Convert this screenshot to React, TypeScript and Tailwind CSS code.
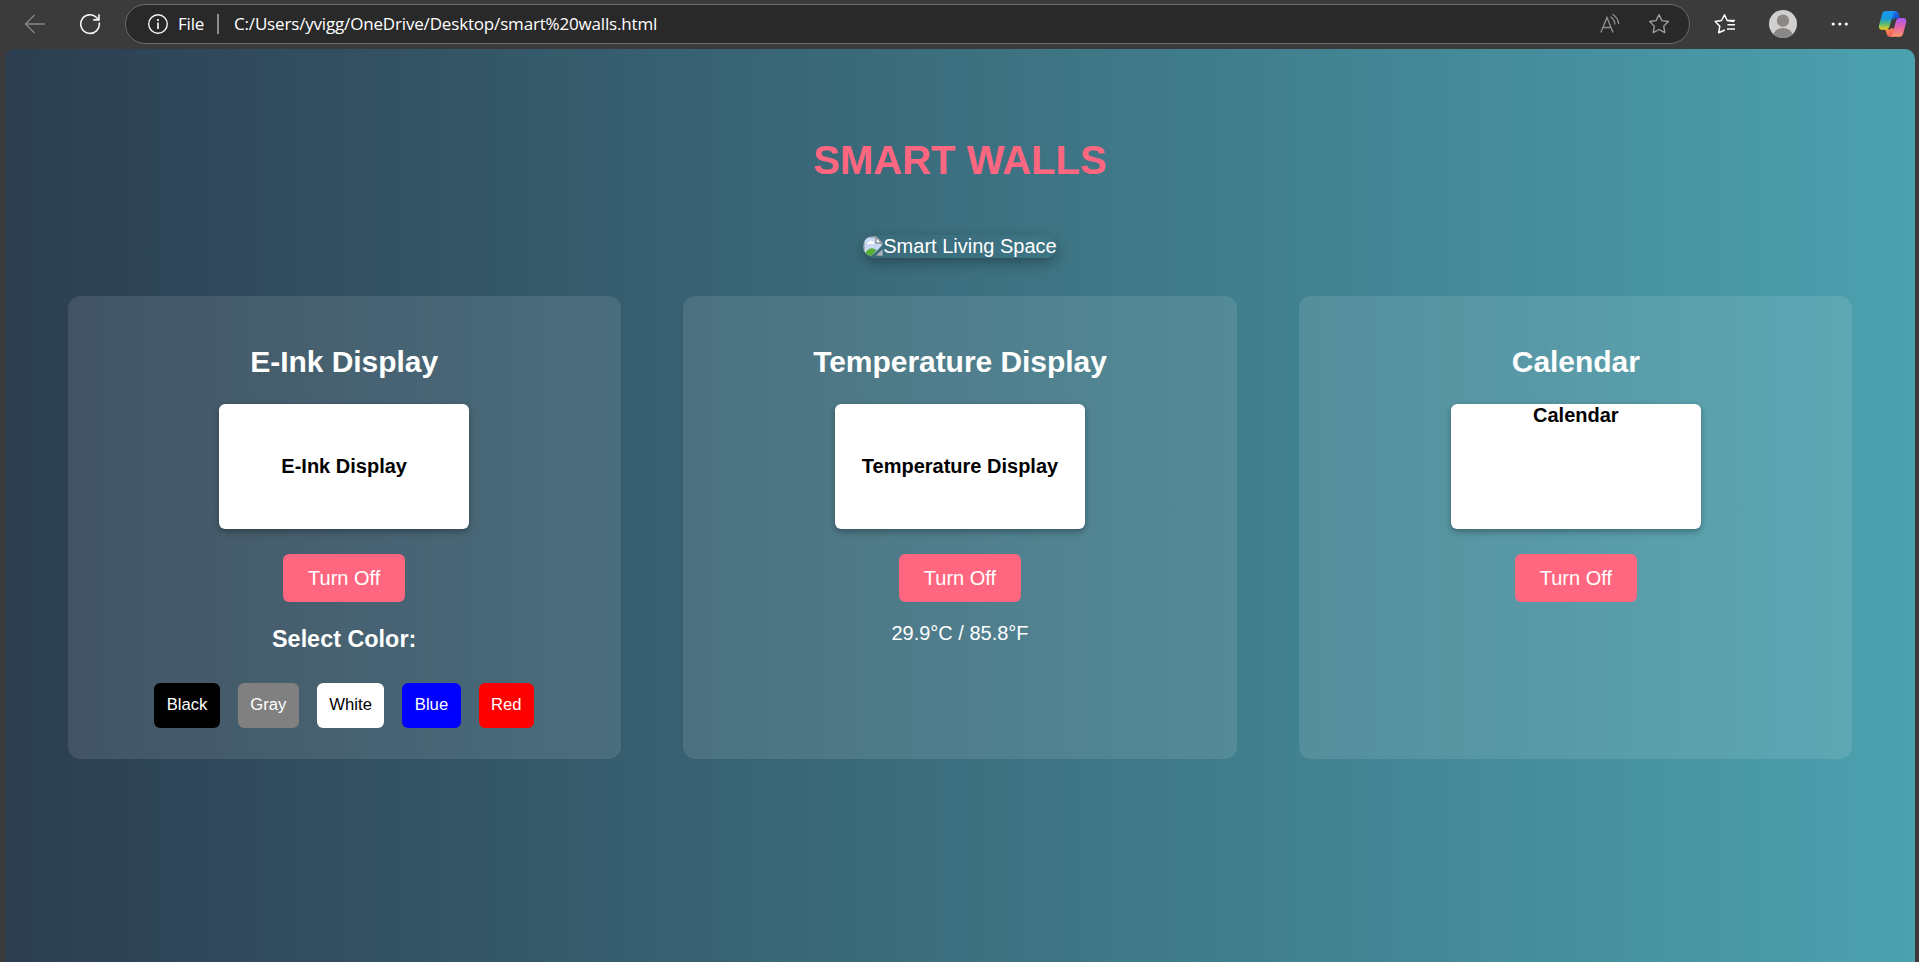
import type { ReactNode } from "react";

function Icon({ size = 24, className = "", children }: { size?: number; className?: string; children: ReactNode }) {
  return (
    <svg width={size} height={size} viewBox="0 0 24 24" fill="none" stroke="currentColor" strokeWidth="1.3" className={`shrink-0 ${className}`}>
      {children}
    </svg>
  );
}

function CopilotLogo() {
  return (
    <svg width="30" height="28" viewBox="0 0 30 28" className="shrink-0">
      <defs>
        <linearGradient id="cpBlue" x1="0" y1="0" x2="0" y2="1">
          <stop offset="0" stopColor="#1b96f2" />
          <stop offset=".4" stopColor="#1799dc" />
          <stop offset=".7" stopColor="#5dbb70" />
          <stop offset="1" stopColor="#f4cf1a" />
        </linearGradient>
        <linearGradient id="cpPink" x1="0" y1="0" x2="0" y2="1">
          <stop offset="0" stopColor="#a557f5" />
          <stop offset=".5" stopColor="#e864a8" />
          <stop offset="1" stopColor="#ff9a60" />
        </linearGradient>
        <linearGradient id="cpTop" x1="0" y1="0" x2="1" y2="1">
          <stop offset="0" stopColor="#1c7df0" />
          <stop offset="1" stopColor="#1747c9" />
        </linearGradient>
        <linearGradient id="cpBottom" x1="0" y1="0" x2="1" y2="1">
          <stop offset="0" stopColor="#ffa03c" />
          <stop offset="1" stopColor="#f0446c" />
        </linearGradient>
      </defs>
      <path d="M13 1H17C19.200 1 20 1.900 20.600 3.800L21.900 8.300H18.500C16.700 8.300 16 8.700 15.500 10L13 8Z" fill="url(#cpTop)" />
      <path d="M16 26.800H12.300C10.200 26.800 9.300 25.900 8.700 24L7.300 19.600H10.500C12.300 19.600 13 19 13.500 17.500L17 20Z" fill="url(#cpBottom)" />
      <path d="M8 1H18.500C16.600 1 15.900 2.200 15.300 4L11.500 16.500C10.700 19 9.800 19.800 7.600 19.800H4.600C1.200 19.800.3 17.700 1.200 14.500L4 4.500C4.700 2.100 5.700 1 8 1Z" fill="url(#cpBlue)" />
      <path d="M21.300 26.800H11.800C13.300 26.800 14 25.700 14.500 24L17.900 11.300C18.600 8.900 19.500 8.100 21.700 8.100H24.800C28 8.100 28.900 10.100 28 13.300L25.200 23.400C24.500 25.800 23.500 26.800 21.300 26.800Z" fill="url(#cpPink)" />
    </svg>
  );
}

const starPath = "M12 2.600l2.900 6 6.500.9-4.700 4.600 1.100 6.500-5.800-3.100-5.800 3.100 1.100-6.500-4.700-4.600 6.500-.9Z";

function BrowserBar() {
  return (
    <header className="flex h-[49px] shrink-0 items-center pb-px text-white">
      <Icon className="ml-[23px] text-[#858585]">
        <path d="M22 12H2.500M11.500 3l-9 9 9 9" />
      </Icon>
      <svg width="22" height="22" viewBox="0 0 22 22" fill="none" stroke="#f4f4f4" strokeWidth="1.600" className="ml-[32px] shrink-0">
        <path d="M20.200 9.500A9.300 9.300 0 1 1 17.600 4.500L19.800 6.800M20 1.200V6.900H14.200" />
      </svg>
      <div className="ml-[24px] flex h-[40px] w-[1565px] shrink-0 items-center rounded-full border border-[#6b6b6b] bg-[#292929] font-['Open_Sans','Noto_Sans',sans-serif] text-[17px]">
        <svg width="22" height="22" viewBox="0 0 22 22" fill="none" stroke="#f4f4f4" strokeWidth="1.400" className="ml-[21px] shrink-0">
          <circle cx="11" cy="11" r="9.300" />
          <path d="M11 9.500V16M11 6v2" strokeWidth="1.700" />
        </svg>
        <span className="ml-[9px] w-[39px] tracking-[-0.2px]">File</span>
        <span className="h-5 w-[2px] bg-[#8a8a8a]" />
        <span className="ml-[15px] tracking-[-0.17px] whitespace-nowrap">C:/Users/yvigg/OneDrive/Desktop/smart%20walls.html</span>
        <svg width="22" height="22" viewBox="0 0 22 22" fill="none" stroke="#929292" strokeWidth="1.300" className="ml-auto shrink-0">
          <path d="M1.800 19.500L8 4.500L14 19.500M3.900 14.500H12M11.500 3.800Q15.500 6.300 16 11.500M13.500 1.200Q19 4.500 19.700 11" />
        </svg>
        <Icon className="mr-[18px] ml-[26px] text-[#a0a0a0]">
          <path d={starPath} strokeLinejoin="round" />
        </Icon>
      </div>
      <svg width="24" height="24" viewBox="0 0 24 24" fill="none" stroke="#ffffff" strokeWidth="1.500" strokeLinejoin="round" className="ml-[23px] shrink-0">
        <path d="M21 9.500L14.200 8.500L11.500 2.800L8.500 8.500L2.200 9.500L6.800 14.200L5.700 20.800L11.800 18M14 8.500H22M14.500 12.700H22M14 17H22" />
      </svg>
      <svg width="28" height="28" viewBox="0 0 28 28" className="ml-[32px] shrink-0">
        <defs>
          <clipPath id="avatar">
            <circle cx="14" cy="14" r="14" />
          </clipPath>
        </defs>
        <circle cx="14" cy="14" r="14" fill="#d2d0ce" />
        <g clipPath="url(#avatar)" fill="#8a8886">
          <circle cx="14" cy="10.700" r="6.200" />
          <ellipse cx="14" cy="26" rx="9.700" ry="8" />
        </g>
      </svg>
      <svg width="18" height="4" viewBox="0 0 18 4" fill="#ffffff" className="ml-[34px] shrink-0">
        <circle cx="2.200" cy="2" r="1.600" />
        <circle cx="8.800" cy="2" r="1.600" />
        <circle cx="15.300" cy="2" r="1.600" />
      </svg>
      <div className="ml-[29px]">
        <CopilotLogo />
      </div>
    </header>
  );
}

function BrokenImageIcon() {
  return (
    <svg width="20" height="20" viewBox="0 0 20 20" className="mb-[2px] shrink-0 rounded-tl-[10px] rounded-bl-[9px]">
      <path d="M1 1H13L19 7V19H1Z" fill="#c9d9f5" stroke="#a0a4aa" strokeWidth="1.500" />
      <path d="M4 8q0-2 2-2q1-2.500 3-1q2 0 2 3Z" fill="#ffffff" />
      <path d="M1 19Q5 11 10.500 12.500L13.500 14L9 19.500Z" fill="#57b035" />
      <path d="M20 8.500L8.500 20H13L20 13.500Z" fill="#3c6c7d" />
      <path d="M13 1V7H19Z" fill="#ffffff" stroke="#8f9499" strokeWidth="1.500" />
      <path d="M13.500 19H19V14Z" fill="#aeb4ba" />
    </svg>
  );
}

function Card({ title, centered = true, children }: { title: string; centered?: boolean; children?: ReactNode }) {
  return (
    <section className="flex h-[463px] flex-col items-center rounded-[12.5px] bg-white/10 pt-[49px]">
      <h2 className="text-[30px] leading-[34px] font-bold tracking-[-0.05px]">{title}</h2>
      <div
        className={`mt-[25px] flex h-[125px] w-[250px] shrink-0 justify-center rounded-[6.25px] bg-white text-[20px] leading-[23px] font-bold text-black shadow-[0_2.5px_6.25px_rgba(0,0,0,0.3)] ${centered ? "items-center" : "items-start"}`}
      >
        {title}
      </div>
      <button className="mt-[25px] h-[48px] w-[122px] shrink-0 rounded-[6.25px] bg-[#ff6680] text-[20px] leading-[23px]">Turn Off</button>
      {children}
    </section>
  );
}

const colors = [
  { name: "Black", className: "bg-black" },
  { name: "Gray", className: "bg-[#808080]" },
  { name: "White", className: "bg-white text-black" },
  { name: "Blue", className: "bg-[#0000ff]" },
  { name: "Red", className: "bg-[#ff0000]" },
];

export default function App() {
  return (
    <div className="flex h-[962px] w-[1919px] flex-col overflow-hidden bg-[#3b3b3b]">
      <BrowserBar />
      <main className="mr-[4px] ml-[5px] flex flex-1 flex-col items-center rounded-t-[10px] bg-linear-[to_right,#2c3e50,#4ca1af] font-['Liberation_Sans',Arial,sans-serif] text-white">
        <h1 className="mt-[88px] text-[40px] leading-[46px] font-bold text-[#ff6680]">SMART WALLS</h1>
        <div className="mt-[52px] flex h-[23px] items-center rounded-[12.5px] text-[20px] leading-[23px] shadow-[0_5px_12.5px_rgba(0,0,0,0.3)]">
          <BrokenImageIcon />
          <span>Smart Living Space</span>
        </div>
        <div className="mt-[38px] grid w-[1785px] grid-cols-3 gap-x-[62.5px]">
          <Card title="E-Ink Display">
            <h3 className="mt-[24px] text-[23.4px] leading-[27px] font-bold">Select Color:</h3>
            <div className="mt-[30px] flex gap-[17.9px]">
              {colors.map((c) => (
                <button key={c.name} className={`h-[45px] rounded-[6.25px] px-[12.5px] pb-[3px] text-[16.67px] ${c.className}`}>
                  {c.name}
                </button>
              ))}
            </div>
          </Card>
          <Card title="Temperature Display">
            <p className="mt-[20px] text-[20px] leading-[23px]">29.9°C / 85.8°F</p>
          </Card>
          <Card title="Calendar" centered={false} />
        </div>
      </main>
    </div>
  );
}
